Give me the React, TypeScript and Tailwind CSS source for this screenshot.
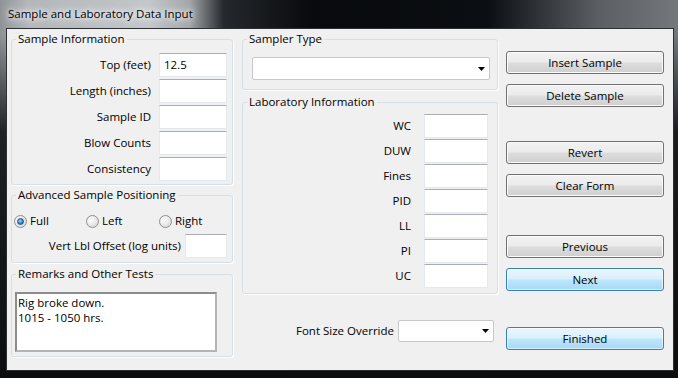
import type { ReactNode } from "react";
import clsx from "clsx";

const sampleRows = ["Top (feet)", "Length (inches)", "Sample ID", "Blow Counts", "Consistency"];
const labRows = ["WC", "DUW", "Fines", "PID", "LL", "PI", "UC"];

function Group({ title, className, children }: { title: string; className?: string; children: ReactNode }) {
  return (
    <fieldset className={clsx("rounded-[3px] border border-[#d5dfe5] shadow-[1px_1px_0_#fff]", className)}>
      <legend className="ml-[4px] px-[2px] leading-4">{title}</legend>
      {children}
    </fieldset>
  );
}

function TextBox({ value, className }: { value?: string; className?: string }) {
  return (
    <div
      className={clsx(
        "flex h-6 items-center border border-[#e3e9ef] border-t-[#abadb3] bg-white pl-[4px] pb-[1px]",
        className
      )}
    >
      {value}
    </div>
  );
}

function Combo({ className }: { className?: string }) {
  return (
    <div className={clsx("flex items-center justify-end rounded-[2px] border border-[#c5c9cd] bg-white pr-[4px]", className)}>
      <svg width="7" height="4" viewBox="0 0 7 4">
        <polygon points="0,0 7,0 3.5,4" fill="#000" />
      </svg>
    </div>
  );
}

function Radio({ label, checked, className }: { label: string; checked?: boolean; className?: string }) {
  return (
    <div className={clsx("flex items-center gap-[3px]", className)}>
      <span className="flex h-[13px] w-[13px] items-center justify-center rounded-full border border-[#8e8f8f] bg-[radial-gradient(circle_at_35%_35%,#ffffff_0%,#e8e8e8_50%,#cfcfcf_100%)]">
        {checked && (
          <span className="h-[7px] w-[7px] rounded-full border border-[#1c4f7c] bg-[radial-gradient(circle_at_40%_35%,#9ad6fb_0%,#3a8bd3_55%,#185c9f_100%)]" />
        )}
      </span>
      <span>{label}</span>
    </div>
  );
}

function Btn({ label, primary, className }: { label: string; primary?: boolean; className?: string }) {
  return (
    <button
      className={clsx(
        "h-[23px] w-full rounded-[3px] border text-center leading-none",
        primary
          ? "border-[#3c7fb1] bg-[linear-gradient(180deg,#eaf6fd_0%,#d9f0fc_48%,#bee6fd_52%,#a7d9f5_100%)] shadow-[inset_0_0_0_1px_rgba(255,255,255,0.55)]"
          : "border-[#707070] bg-[linear-gradient(180deg,#f2f2f2_0%,#ebebeb_48%,#dddddd_52%,#cfcfcf_100%)] shadow-[inset_0_0_0_1px_#fbfbfb]",
        className
      )}
    >
      {label}
    </button>
  );
}

export default function App() {
  return (
    <div className="h-[378px] w-[678px] overflow-hidden bg-[linear-gradient(180deg,rgba(10,12,14,0)_0%,rgba(10,12,14,0)_9%,rgba(10,12,14,0.85)_35%,#0b0d0f_100%),linear-gradient(90deg,#8f9397_0%,#b3b6b9_4%,#c4c7ca_22%,#a3a6a9_28%,#25282c_33%,#080a0d_46%,#0b0e12_72%,#5a5e62_88%,#74787c_100%)] font-['Open_Sans',sans-serif] text-[11.5px] text-black">
      <div className="flex h-[28px] items-center pl-[8px]">
        <span className="[text-shadow:0_0_5px_#fff,0_0_9px_#fff,0_0_14px_rgba(255,255,255,0.9)]">
          Sample and Laboratory Data Input
        </span>
      </div>

      <div className="ml-[6px] flex h-[343px] w-[668px] border border-[#2b2f33] bg-[#f0f0f0] pl-[4px]">
        {/* left column */}
        <div className="flex w-[222px] flex-col pt-[2px]">
          <Group title="Sample Information" className="h-[154px]">
            <div className="grid grid-cols-[1fr_68px] items-center gap-x-[8px] gap-y-[2px] pr-[5px] pt-[6px]">
              {sampleRows.map((label, i) => (
                <div key={label} className="contents">
                  <span className="text-right">{label}</span>
                  <TextBox value={i === 0 ? "12.5" : undefined} />
                </div>
              ))}
            </div>
          </Group>

          <Group title="Advanced Sample Positioning" className="mt-[2px] h-[76px]">
            <div className="box-content flex h-6 items-center pl-[2px] pt-[6px]">
              <Radio label="Full" checked className="w-[72px]" />
              <Radio label="Left" className="w-[73px]" />
              <Radio label="Right" />
            </div>
            <div className="mt-[1px] flex items-center justify-end gap-[4px] pr-[5px]">
              <span>Vert Lbl Offset (log units)</span>
              <TextBox className="w-[42px]" />
            </div>
          </Group>

          <Group title="Remarks and Other Tests" className="mt-[3px] h-[91px]">
            <div className="pl-[3px] pt-[10px]">
              <div className="h-[60px] w-[202px] border-2 border-[#b4b4b4] border-t-[#8c8c8c] border-l-[#8c8c8c] bg-white px-[1px] pt-[1px] leading-[15px]">
                <div>Rig broke down.</div>
                <div>1015 - 1050 hrs.</div>
              </div>
            </div>
          </Group>
        </div>

        {/* middle column */}
        <div className="ml-[9px] flex w-[256px] flex-col pt-[2px]">
          <Group title="Sampler Type" className="h-[59px]">
            <div className="pl-[9px] pr-[7px] pt-[10px]">
              <Combo className="h-[23px]" />
            </div>
          </Group>

          <Group title="Laboratory Information" className="mt-[4px] h-[200px]">
            <div className="grid grid-cols-[1fr_64px] items-center gap-x-[13px] gap-y-[1px] pr-[9px] pt-[4px]">
              {labRows.map((label) => (
                <div key={label} className="contents">
                  <span className="text-right">{label}</span>
                  <TextBox />
                </div>
              ))}
            </div>
          </Group>

          <div className="mt-[26px] flex items-center justify-end gap-[4px] pr-[4px]">
            <span>Font Size Override</span>
            <Combo className="h-[22px] w-[96px]" />
          </div>
        </div>

        {/* right column */}
        <div className="ml-[8px] flex w-[158px] flex-col pt-[22px]">
          <Btn label="Insert Sample" />
          <Btn label="Delete Sample" className="mt-[10px]" />
          <Btn label="Revert" className="mt-[34px]" />
          <Btn label="Clear Form" className="mt-[10px]" />
          <Btn label="Previous" className="mt-[38px]" />
          <Btn label="Next" primary className="mt-[10px]" />
          <Btn label="Finished" primary className="mt-[36px]" />
        </div>
      </div>
    </div>
  );
}
